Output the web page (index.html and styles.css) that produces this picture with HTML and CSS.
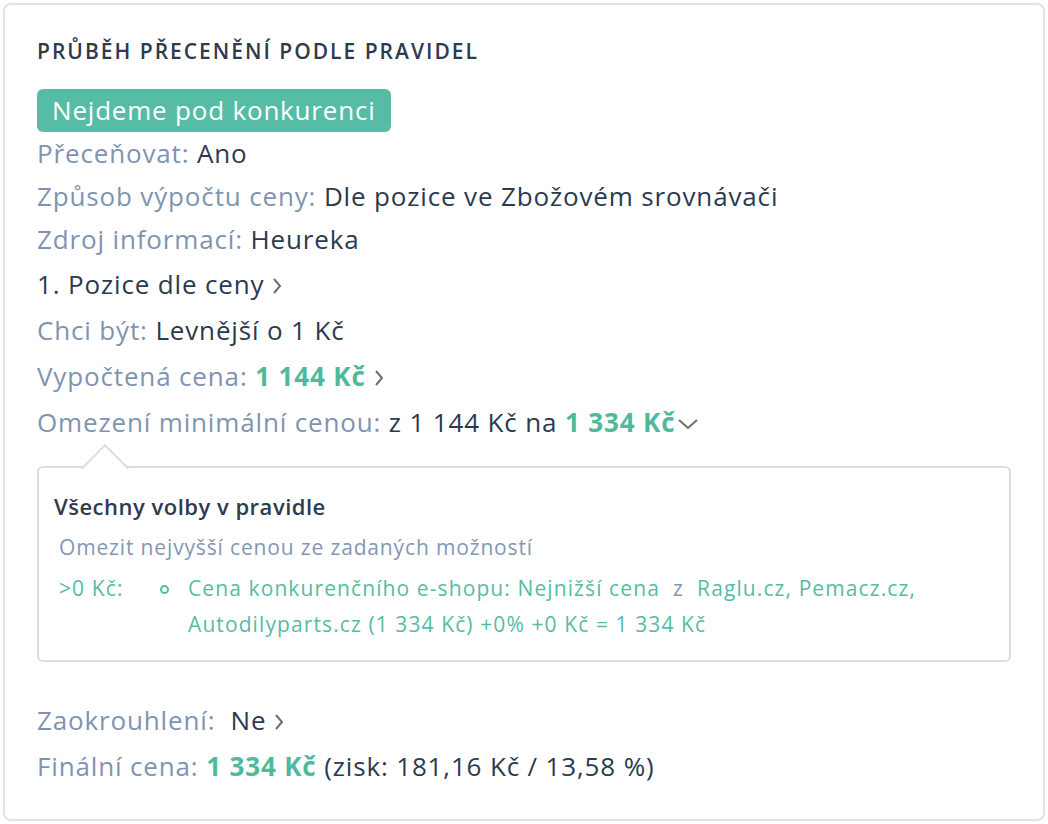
FILE: index.html
```html
<!DOCTYPE html>
<html lang="cs">
<head>
    <meta charset="UTF-8">
    <title>Průběh přecenění</title>
    <link rel="stylesheet" href="styles.css">
</head>
<body>
    <div class="card">
        <h2 class="title">PRŮBĚH PŘECENĚNÍ PODLE PRAVIDEL</h2>
        <span class="badge">Nejdeme pod konkurenci</span>

        <div class="row"><span class="label">Přeceňovat:</span> <span class="value">Ano</span></div>
        <div class="row"><span class="label">Způsob výpočtu ceny:</span> <span class="value">Dle pozice ve Zbožovém srovnávači</span></div>
        <div class="row"><span class="label">Zdroj informací:</span> <span class="value">Heureka</span></div>

        <div class="row narrow"><span class="value">1. Pozice dle ceny</span><svg class="chev-right" width="12" height="18" viewBox="0 0 12 18"><polyline points="3,2 9,9 3,16" /></svg></div>
        <div class="row narrow"><span class="label">Chci být:</span> <span class="value">Levnější o 1 Kč</span></div>
        <div class="row narrow"><span class="label">Vypočtená cena:</span> <span class="price">1 144 Kč</span><svg class="chev-right" width="12" height="18" viewBox="0 0 12 18"><polyline points="3,2 9,9 3,16" /></svg></div>
        <div class="row narrow"><span class="label">Omezení minimální cenou:</span> <span class="value">z 1 144 Kč na</span> <span class="price">1 334 Kč</span><svg class="chev-down" width="22" height="12" viewBox="0 0 22 12"><polyline points="2,2 11,10 20,2" /></svg></div>

        <div class="rule-box">
            <div class="rule-title">Všechny volby v pravidle</div>
            <div class="rule-sub">Omezit nejvyšší cenou ze zadaných možností</div>
            <div class="rule-item">
                <span class="rule-min">&gt;0 Kč:</span>
                <span class="rule-bullet"></span>
                <div class="rule-text"><span>Cena konkurenčního e-shopu: Nejnižší cena</span>&nbsp; <span class="rule-from">z</span> &nbsp;<span>Raglu.cz, Pemacz.cz, Autodilyparts.cz (1 334 Kč) +0% +0 Kč = 1 334 Kč</span></div>
            </div>
        </div>

        <div class="row narrow"><span class="label">Zaokrouhlení:</span>&nbsp; <span class="value">Ne</span><svg class="chev-right" width="12" height="18" viewBox="0 0 12 18"><polyline points="3,2 9,9 3,16" /></svg></div>
        <div class="row narrow"><span class="label">Finální cena:</span> <span class="price">1 334 Kč</span> <span class="value">(zisk: 181,16 Kč / 13,58 %)</span></div>
    </div>
</body>
</html>
```

FILE: styles.css
```css
body {
    margin: 0;
    background: #fff;
    font-family: "Open Sans", Lato, sans-serif;
    color: #2c3a4f;
}
.card {
    margin: 3px;
    width: 1042px;
    height: 818px;
    box-sizing: border-box;
    border: 2px solid #e3e3e3;
    border-radius: 8px;
    padding: 34px 32px 0 32px;
}
.title {
    margin: 0 0 26px 0;
    font-size: 21px;
    font-weight: 600;
    letter-spacing: 2px;
    color: #2f3a4f;
    line-height: 24px;
}
.badge {
    display: inline-block;
    background: #56bca5;
    color: #fff;
    font-size: 26px;
    letter-spacing: 0.8px;
    line-height: 43px;
    padding: 0 15px;
    border-radius: 6px;
}
.row {
    font-size: 26px;
    letter-spacing: 0.85px;
    line-height: 43px;
}
.row.narrow {
    line-height: 46px;
}
.label {
    color: #7f93b2;
}
.value {
    color: #2c3a4f;
}
.price {
    color: #4fb99d;
    font-weight: 700;
}
.chev-right {
    margin-left: 7px;
    vertical-align: -1px;
    fill: none;
    stroke: #6d6d6d;
    stroke-width: 2;
}
.chev-down {
    margin-left: 2px;
    vertical-align: 2px;
    fill: none;
    stroke: #6d6d6d;
    stroke-width: 2;
}
.rule-box {
    position: relative;
    margin: 21px 0 35px 0;
    border: 2px solid #d6dee8;
    border-radius: 6px;
    padding: 20px 15px 18px 15px;
}
.rule-box::before {
    content: "";
    position: absolute;
    left: 49px;
    top: -17px;
    width: 32px;
    height: 32px;
    background: #fff;
    border-top: 2px solid #d6dee8;
    border-left: 2px solid #d6dee8;
    transform: rotate(45deg);
}
.rule-title {
    position: relative;
    font-size: 22px;
    font-weight: 600;
    letter-spacing: 0.5px;
    color: #2f3a4f;
    line-height: 36px;
}
.rule-sub {
    font-size: 21px;
    letter-spacing: 0.85px;
    color: #8397b5;
    line-height: 46px;
    padding-left: 5px;
}
.rule-item {
    display: flex;
    font-size: 21px;
    letter-spacing: 1.1px;
    color: #56bca5;
    line-height: 36px;
    padding-left: 5px;
}
.rule-min {
    width: 100px;
    flex: none;
}
.rule-bullet {
    flex: none;
    width: 5px;
    height: 5px;
    border: 2px solid #56bca5;
    border-radius: 50%;
    margin: 15px 19px 0 1px;
}
.rule-from {
    color: #8397b5;
}
.rule-text {
    flex: 1;
    padding-right: 20px;
}
```
